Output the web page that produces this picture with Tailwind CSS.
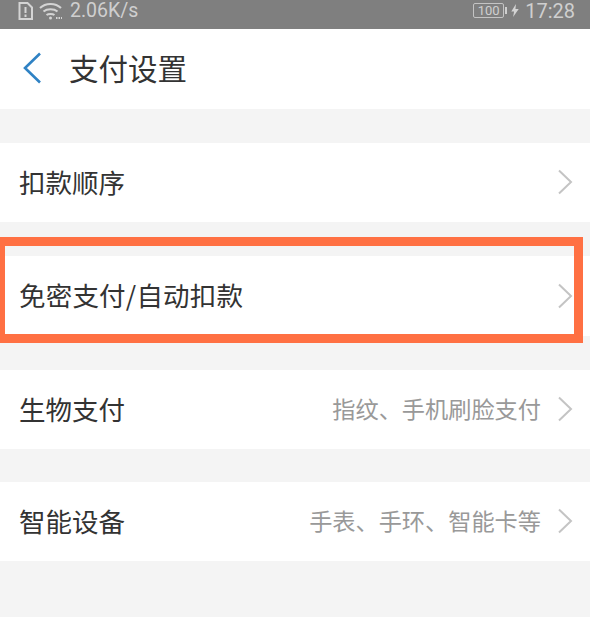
<!DOCTYPE html>
<html lang="zh-CN">
<head>
    <meta charset="UTF-8">
    <title>支付设置</title>
    <script src="https://cdn.jsdelivr.net/npm/@tailwindcss/browser@4"></script>
</head>
<body class="bg-[#f4f4f4] font-['Noto_Sans_CJK_SC','Noto_Sans',sans-serif]">
    <div class="relative w-[590px] h-[617px] overflow-hidden">
        <!-- Status bar -->
        <div class="h-[29px] pb-[8px] bg-[#7f7f7f] flex items-center justify-between pl-[18px] pr-[15px] text-[#cfcfcf] font-['Roboto',sans-serif]">
            <div class="flex items-center">
                <svg width="15" height="18" viewBox="0 0 15 18" fill="none" stroke="#d4d4d4" stroke-width="2"><path d="M1.500 1h8l4.500 4.500V17H1.500z"/><path d="M7.500 5v6M7.500 12.500v2.500"/></svg>
                <svg class="ml-[6px]" width="24" height="18" viewBox="0 0 24 18" fill="none" stroke="#d4d4d4" stroke-width="2"><path d="M1 6c5.500-5.500 15.500-5.500 21 0M4.500 9.500c3.500-3 10.500-3 14 0M7.500 13c2-1.500 6-1.500 8 0"/><circle cx="11.500" cy="16" r="1.500" fill="#d4d4d4" stroke="none"/><path d="M17 16h6" stroke-dasharray="1.500 1"/></svg>
                <span class="ml-[7px] text-[19.500px] leading-none">2.06K/s</span>
            </div>
            <div class="flex items-center">
                <div class="w-[31px] h-[15px] border border-[#c4c4c4] rounded-[2px] flex items-center justify-center text-[13px] leading-none">100</div>
                <div class="w-[2px] h-[7px] bg-[#cfcfcf] ml-[1px]"></div>
                <svg class="ml-[4px]" width="8" height="13" viewBox="0 0 8 14" fill="#d4d4d4"><path d="M5 0L0 8h3l-1 6 6-8.500H4.500z"/></svg>
                <span class="ml-[6px] text-[20px] leading-none">17:28</span>
            </div>
        </div>

        <!-- Header -->
        <header class="h-[80px] pb-[2px] bg-white flex items-center pl-[22px]">
            <svg width="20" height="32" viewBox="0 0 20 32" fill="none" stroke="#2f82c4" stroke-width="2.600"><path d="M18 1.500L3 16l15 14.500"/></svg>
            <h1 class="ml-[27px] text-[29.500px] leading-none text-[#333]">支付设置</h1>
        </header>

        <!-- Settings rows -->
        <div class="mt-[34px] flex flex-col gap-[34px]">
            <div class="h-[79px] pb-[1px] bg-white flex items-center justify-between pl-[19px] pr-[17px]">
                <span class="text-[26.500px] leading-none text-[#333]">扣款顺序</span>
                <svg width="16" height="26" viewBox="0 0 16 26" fill="none" stroke="#c4c4c4" stroke-width="2"><path d="M2 1.500L14 13 2 24.500"/></svg>
            </div>
            <div class="h-[80px] pb-[1px] bg-white flex items-center justify-between pl-[19px] pr-[17px]">
                <span class="text-[26.500px] leading-none text-[#333] tracking-[0.2px]">免密支付/自动扣款</span>
                <svg width="16" height="26" viewBox="0 0 16 26" fill="none" stroke="#c4c4c4" stroke-width="2"><path d="M2 1.500L14 13 2 24.500"/></svg>
            </div>
            <div class="h-[79px] pb-[1px] bg-white flex items-center justify-between pl-[19px] pr-[17px]">
                <span class="text-[26.500px] leading-none text-[#333]">生物支付</span>
                <div class="flex items-center gap-[16px]">
                    <span class="text-[23.200px] leading-none text-[#999]">指纹、手机刷脸支付</span>
                    <svg width="16" height="26" viewBox="0 0 16 26" fill="none" stroke="#c4c4c4" stroke-width="2"><path d="M2 1.500L14 13 2 24.500"/></svg>
                </div>
            </div>
            <div class="h-[79px] -mt-[1px] pb-[1px] bg-white flex items-center justify-between pl-[19px] pr-[17px]">
                <span class="text-[26.500px] leading-none text-[#333]">智能设备</span>
                <div class="flex items-center gap-[16px]">
                    <span class="text-[23.200px] leading-none text-[#999]">手表、手环、智能卡等</span>
                    <svg width="16" height="26" viewBox="0 0 16 26" fill="none" stroke="#c4c4c4" stroke-width="2"><path d="M2 1.500L14 13 2 24.500"/></svg>
                </div>
            </div>
        </div>

        <!-- Orange highlight drawn over the screenshot -->
        <div class="absolute left-[-4px] top-[237px] w-[587px] h-[106px] border-[9px] border-[#ff7043]"></div>
    </div>
</body>
</html>
